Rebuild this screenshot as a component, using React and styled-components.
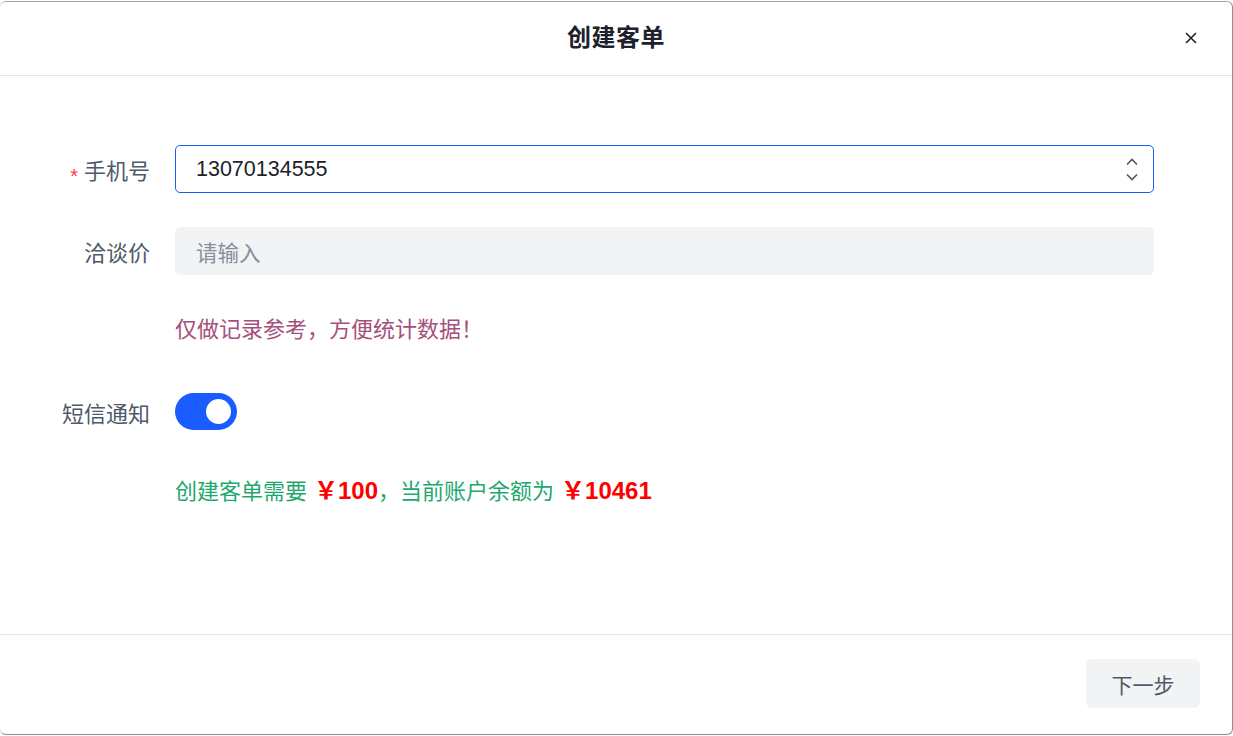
import React from 'react';
import styled, { createGlobalStyle } from 'styled-components';

const GlobalStyle = createGlobalStyle`
    html, body {
        margin: 0;
        padding: 0;
        background: #ffffff;
    }
    body {
        font-family: "Liberation Sans", "Noto Sans CJK SC", sans-serif;
    }
`

function ChevronUp() {
    return (
        <svg width="14" height="9" viewBox="0 0 14 9">
            <path d="M2 7.5 L7 2.5 L12 7.5" fill="none" stroke="#4e5969" strokeWidth="1.6" />
        </svg>
    );
}

function ChevronDown() {
    return (
        <svg width="14" height="9" viewBox="0 0 14 9">
            <path d="M2 1.5 L7 6.5 L12 1.5" fill="none" stroke="#4e5969" strokeWidth="1.6" />
        </svg>
    );
}

function CloseIcon() {
    return (
        <svg width="14" height="14" viewBox="0 0 14 14">
            <path d="M2 2 L12 12 M12 2 L2 12" fill="none" stroke="#1d2129" strokeWidth="1.6" />
        </svg>
    );
}

function App() {
    return (
        <>
            <GlobalStyle />
            <Dialog>
                <Header>
                    <Title>创建客单</Title>
                    <CloseButton><CloseIcon /></CloseButton>
                </Header>
                <Body>
                    <FormRow $mb={34}>
                        <Label><Required>*</Required>手机号</Label>
                        <InputBox $active>
                            <InputText>13070134555</InputText>
                            <Stepper>
                                <ChevronUp />
                                <ChevronDown />
                            </Stepper>
                        </InputBox>
                    </FormRow>
                    <FormRow $mb={40}>
                        <Label>洽谈价</Label>
                        <InputBox>
                            <InputText $placeholder>请输入</InputText>
                        </InputBox>
                    </FormRow>
                    <FormRow $mb={48}>
                        <span />
                        <Hint>仅做记录参考，方便统计数据！</Hint>
                    </FormRow>
                    <FormRow $mb={46}>
                        <Label>短信通知</Label>
                        <SwitchTrack>
                            <SwitchKnob />
                        </SwitchTrack>
                    </FormRow>
                    <FormRow>
                        <span />
                        <CostLine>
                            创建客单需要<Money>￥100</Money>，当前账户余额为<Money>￥10461</Money>
                        </CostLine>
                    </FormRow>
                </Body>
                <Footer>
                    <NextButton>下一步</NextButton>
                </Footer>
            </Dialog>
        </>
    );
}

export default App;

const Dialog = styled.div`
    box-sizing: border-box;
    width: 1233px;
    height: 734px;
    margin-top: 1px;
    background: #ffffff;
    border-top: 1px solid #a5a5a5;
    border-right: 1px solid #8e8e8e;
    border-bottom: 1px solid #8e8e8e;
    border-radius: 6px;
    display: flex;
    flex-direction: column;
`

const Header = styled.div`
    height: 73px;
    flex-shrink: 0;
    border-bottom: 1px solid #e5e6eb;
    display: flex;
    align-items: center;
    justify-content: center;
    position: relative;
`

const Title = styled.div`
    font-size: 24px;
    font-weight: 600;
    color: #1d2129;
    letter-spacing: 0.5px;
    margin-bottom: 6px;
`

const CloseButton = styled.div`
    position: absolute;
    right: 34px;
    top: 29px;
    display: flex;
`

const Body = styled.div`
    flex: 1;
    padding: 69px 78px 0 0;
`

const FormRow = styled.div`
    display: grid;
    grid-template-columns: 150px 1fr;
    column-gap: 25px;
    align-items: center;
    margin-bottom: ${p => p.$mb || 0}px;
`

const Label = styled.div`
    text-align: right;
    font-size: 22px;
    color: #4e5969;
    white-space: nowrap;
`

const Required = styled.span`
    color: #f53f3f;
    font-size: 20px;
    margin-right: 6px;
    position: relative;
    top: 4px;
`

const InputBox = styled.div`
    box-sizing: border-box;
    height: 48px;
    border-radius: 5px;
    padding: 0 20px;
    display: flex;
    align-items: center;
    background: ${p => p.$active ? '#ffffff' : '#f2f3f5'};
    border: 1px solid ${p => p.$active ? '#165dff' : '#f2f3f5'};
`

const InputText = styled.div`
    flex: 1;
    font-size: 21.5px;
    color: ${p => p.$placeholder ? '#86909c' : '#1d2129'};
`

const Stepper = styled.div`
    display: flex;
    flex-direction: column;
    gap: 7px;
    margin-right: -6px;
`

const Hint = styled.div`
    font-size: 22px;
    color: #a5507b;
    line-height: 30px;
`

const SwitchTrack = styled.div`
    box-sizing: border-box;
    width: 62px;
    height: 37px;
    border-radius: 19px;
    background: #1a5cff;
    display: flex;
    align-items: center;
    justify-content: flex-end;
    padding-right: 6px;
`

const SwitchKnob = styled.div`
    width: 25px;
    height: 25px;
    border-radius: 50%;
    background: #ffffff;
`

const CostLine = styled.div`
    font-size: 22px;
    color: #1fa86e;
    line-height: 30px;
`

const Money = styled.span`
    color: #ff0000;
    font-weight: 700;
    font-size: 24px;
    margin-left: 7px;
`

const Footer = styled.div`
    height: 100px;
    flex-shrink: 0;
    box-sizing: border-box;
    border-top: 1px solid #e5e6eb;
    display: flex;
    align-items: center;
    justify-content: flex-end;
    padding: 0 32px 0 0;
`

const NextButton = styled.div`
    width: 114px;
    height: 49px;
    margin-bottom: 2px;
    border-radius: 6px;
    background: #f2f3f5;
    color: #4e5969;
    font-size: 21px;
    display: flex;
    align-items: center;
    justify-content: center;
`
